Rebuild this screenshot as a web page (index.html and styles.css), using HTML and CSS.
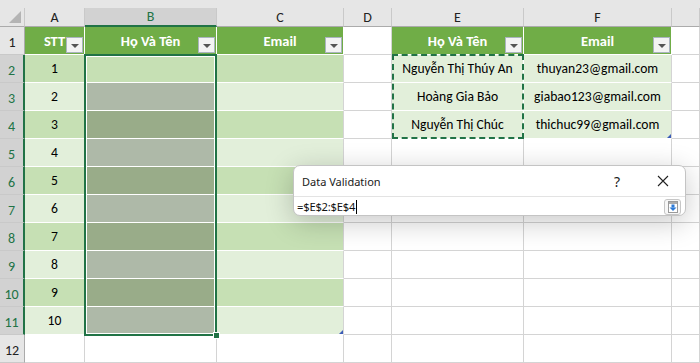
FILE: index.html
```html
<!DOCTYPE html>
<html lang="vi">
<head>
  <meta charset="UTF-8">
  <meta name="viewport" content="width=device-width, initial-scale=1.0">
  <title>Data Validation</title>
  <link rel="stylesheet" href="styles.css">
</head>
<body>
  <div class="strip"></div>

  <div class="sheet">
    <!-- column headers -->
    <div class="ch corner"><span class="tri"></span></div>
    <div class="ch">A</div>
    <div class="ch sel">B</div>
    <div class="ch">C</div>
    <div class="ch">D</div>
    <div class="ch">E</div>
    <div class="ch">F</div>
    <div class="ch"></div>

    <!-- row 1 -->
    <div class="rh">1</div>
    <div class="c th">STT<span class="filter"></span></div>
    <div class="c th">Họ Và Tên<span class="filter"></span></div>
    <div class="c th last">Email<span class="filter"></span></div>
    <div class="c"></div>
    <div class="c th">Họ Và Tên<span class="filter"></span></div>
    <div class="c th last">Email<span class="filter"></span></div>
    <div class="c"></div>

    <!-- row 2 -->
    <div class="rh sel">2</div>
    <div class="c dk">1</div>
    <div class="c dk"></div>
    <div class="c dk last"></div>
    <div class="c"></div>
    <div class="c lt">Nguyễn Thị Thúy An</div>
    <div class="c lt last">thuyan23@gmail.com</div>
    <div class="c"></div>

    <!-- row 3 -->
    <div class="rh sel">3</div>
    <div class="c lt">2</div>
    <div class="c gl"></div>
    <div class="c lt last"></div>
    <div class="c"></div>
    <div class="c lt">Hoàng Gia Bảo</div>
    <div class="c lt last">giabao123@gmail.com</div>
    <div class="c"></div>

    <!-- row 4 -->
    <div class="rh sel">4</div>
    <div class="c dk">3</div>
    <div class="c gd"></div>
    <div class="c dk last"></div>
    <div class="c"></div>
    <div class="c lt">Nguyễn Thị Chúc</div>
    <div class="c lt last rz">thichuc99@gmail.com</div>
    <div class="c"></div>

    <!-- row 5 -->
    <div class="rh sel">5</div>
    <div class="c lt">4</div>
    <div class="c gl"></div>
    <div class="c lt last"></div>
    <div class="c"></div>
    <div class="c"></div>
    <div class="c"></div>
    <div class="c"></div>

    <!-- row 6 -->
    <div class="rh sel">6</div>
    <div class="c dk">5</div>
    <div class="c gd"></div>
    <div class="c dk last"></div>
    <div class="c"></div>
    <div class="c"></div>
    <div class="c"></div>
    <div class="c"></div>

    <!-- row 7 -->
    <div class="rh sel">7</div>
    <div class="c lt">6</div>
    <div class="c gl"></div>
    <div class="c lt last"></div>
    <div class="c"></div>
    <div class="c"></div>
    <div class="c"></div>
    <div class="c"></div>

    <!-- row 8 -->
    <div class="rh sel">8</div>
    <div class="c dk">7</div>
    <div class="c gd"></div>
    <div class="c dk last"></div>
    <div class="c"></div>
    <div class="c"></div>
    <div class="c"></div>
    <div class="c"></div>

    <!-- row 9 -->
    <div class="rh sel">9</div>
    <div class="c lt">8</div>
    <div class="c gl"></div>
    <div class="c lt last"></div>
    <div class="c"></div>
    <div class="c"></div>
    <div class="c"></div>
    <div class="c"></div>

    <!-- row 10 -->
    <div class="rh sel">10</div>
    <div class="c dk">9</div>
    <div class="c gd"></div>
    <div class="c dk last"></div>
    <div class="c"></div>
    <div class="c"></div>
    <div class="c"></div>
    <div class="c"></div>

    <!-- row 11 -->
    <div class="rh sel">11</div>
    <div class="c lt">10</div>
    <div class="c gl"></div>
    <div class="c lt last rz"></div>
    <div class="c"></div>
    <div class="c"></div>
    <div class="c"></div>
    <div class="c"></div>

    <!-- row 12 -->
    <div class="rh">12</div>
    <div class="c"></div>
    <div class="c"></div>
    <div class="c"></div>
    <div class="c"></div>
    <div class="c"></div>
    <div class="c"></div>
    <div class="c"></div>

    <!-- selection and copy range (laid over the cells) -->
    <div class="selection"><span class="handle"></span></div>
    <div class="ants"></div>
  </div>

  <div class="dialog">
    <div class="dialog-title">
      <span class="title-text">Data Validation</span>
      <span class="help">?</span>
      <span class="close">
        <svg width="12" height="12" viewBox="0 0 12 12">
          <path d="M1 1 L11 11 M11 1 L1 11" stroke="#222" stroke-width="1.1" fill="none"/>
        </svg>
      </span>
    </div>
    <div class="dialog-input">
      <span class="formula">=$E$2:$E$4</span><span class="caret"></span>
      <span class="refbtn">
        <svg width="14" height="14" viewBox="0 0 14 14">
          <rect x="2.5" y="1.5" width="9" height="11" fill="#fff" stroke="#9a9a9a"/>
          <line x1="3" y1="3" x2="11" y2="3" stroke="#5a5a5a" stroke-width="1.2"/>
          <rect x="5.5" y="4.5" width="3" height="3" fill="#2d7ad6"/>
          <polygon points="3.5,7.5 10.5,7.5 7,11" fill="#2d7ad6"/>
        </svg>
      </span>
    </div>
  </div>
</body>
</html>
```

FILE: styles.css
```css
body {
  margin: 0;
  background-color: #fff;
  font-family: Calibri, Carlito, Lato, sans-serif;
  overflow: hidden;
  position: relative;
  width: 700px;
  height: 363px;
}

.strip {
  height: 8px;
  background-color: #e6e6e6;
}

.sheet {
  position: relative;
  display: grid;
  grid-template-columns: 25px 60px 132px 127px 48px 132px 148px 28px;
  grid-template-rows: 19px repeat(12, 28px);
}

/* Column headers */
.ch {
  box-sizing: border-box;
  background-color: #e6e6e6;
  border-right: 1px solid #c9c9c9;
  border-bottom: 1px solid #ababab;
  display: flex;
  align-items: center;
  justify-content: center;
  font-size: 14px;
  color: #222;
}

.ch.sel {
  background-color: #d2d2d2;
  color: #217346;
  border-bottom: 2px solid #217346;
}

.corner {
  position: relative;
}

.tri {
  position: absolute;
  right: 3px;
  bottom: 3px;
  width: 0;
  height: 0;
  border-left: 12px solid transparent;
  border-bottom: 12px solid #b4b4b4;
}

/* Row headers */
.rh {
  box-sizing: border-box;
  background-color: #e6e6e6;
  border-right: 1px solid #ababab;
  border-bottom: 1px solid #c9c9c9;
  display: flex;
  align-items: flex-end;
  justify-content: center;
  padding-bottom: 3px;
  font-size: 14px;
  color: #222;
}

.rh.sel {
  background-color: #d2d2d2;
  color: #217346;
  border-right: 2px solid #217346;
}

/* Cells */
.c {
  box-sizing: border-box;
  position: relative;
  border-right: 1px solid #d4d4d4;
  border-bottom: 1px solid #d4d4d4;
  display: flex;
  align-items: center;
  justify-content: center;
  font-size: 13.6px;
  color: #000;
  white-space: nowrap;
}

.th {
  background-color: #70ad47;
  color: #fff;
  font-weight: bold;
  font-size: 14.5px;
  border-color: #fff;
}

.dk {
  background-color: #c6e0b4;
  border-color: #fff;
}

.lt {
  background-color: #e2efda;
  border-color: #fff;
}

.gd {
  background-color: #99ac89;
  border-color: #fff;
}

.gl {
  background-color: #aeb9a8;
  border-color: #fff;
}

.last {
  border-right-color: #d4d4d4;
}

.th.last {
  border-right-color: #fff;
}

/* table resize corner */
.rz:after {
  content: "";
  position: absolute;
  right: 0;
  bottom: 0;
  width: 0;
  height: 0;
  border-left: 4px solid transparent;
  border-bottom: 4px solid #3b5cb8;
}

.filter {
  position: absolute;
  right: 1px;
  bottom: 1px;
  box-sizing: border-box;
  width: 17px;
  height: 16px;
  background-color: #f3f3f3;
  border: 1px solid #aab4bf;
  display: flex;
  align-items: center;
  justify-content: center;
}

.filter:before {
  content: "";
  width: 0;
  height: 0;
  border-left: 4px solid transparent;
  border-right: 4px solid transparent;
  border-top: 4px solid #555;
  margin-top: 1px;
}

/* Selected range B2:B11, drawn over its grid area */
.selection {
  position: absolute;
  grid-column: 3 / 4;
  grid-row: 3 / 13;
  top: -1px;
  left: -1px;
  right: 0;
  bottom: -1px;
  border: 2px solid #217346;
  box-shadow: inset 0 0 0 1px #fff;
}

.handle {
  position: absolute;
  right: -5px;
  bottom: -5px;
  width: 5px;
  height: 5px;
  background-color: #217346;
  border: 1px solid #fff;
}

/* Copy range E2:E4 */
.ants {
  position: absolute;
  grid-column: 6 / 7;
  grid-row: 3 / 6;
  top: -1px;
  left: 0;
  right: 0;
  bottom: 0;
  border: 2px dashed #217346;
}

/* Collapsed dialog */
.dialog {
  position: absolute;
  left: 293px;
  top: 165px;
  width: 393px;
  height: 51px;
  box-sizing: border-box;
  background-color: #fff;
  border: 1px solid #c4c4c4;
  border-radius: 7px;
  box-shadow: 0 6px 28px rgba(0, 0, 0, 0.22);
  font-family: "Noto Sans", "Open Sans", sans-serif;
  overflow: hidden;
}

.dialog-title {
  height: 30px;
  display: flex;
  align-items: center;
  padding-left: 8px;
  font-size: 11px;
  color: #1a1a1a;
}

.title-text {
  flex: 1;
}

.help {
  font-size: 14px;
  width: 20px;
  margin-right: 26px;
  text-align: center;
}

.close {
  width: 20px;
  margin-right: 12px;
  display: flex;
  justify-content: center;
}

.dialog-input {
  height: 19px;
  border-top: 1px solid #e3e3e3;
  display: flex;
  align-items: center;
  padding-left: 3px;
  font-size: 11.2px;
  color: #111;
}

.caret {
  width: 1px;
  height: 14px;
  background-color: #000;
  margin-left: 1px;
}

.formula {
  letter-spacing: -0.2px;
}

.refbtn {
  margin-left: auto;
  margin-right: 4px;
  box-sizing: border-box;
  width: 17px;
  height: 16px;
  border: 1px solid #c6c6c6;
  border-radius: 3px;
  background-color: #f7f7f7;
  display: flex;
  align-items: center;
  justify-content: center;
}
```
